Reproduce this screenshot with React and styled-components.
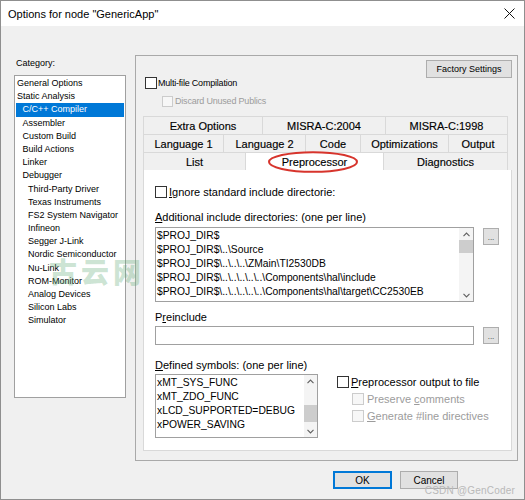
import React from 'react'
import styled, { createGlobalStyle } from 'styled-components'

const GlobalStyle = createGlobalStyle`
  html, body { margin: 0; padding: 0; background: #fff; }
  body { font-family: "Liberation Sans", Arial, sans-serif; color: #000; }
  * { box-sizing: border-box; }
`

const Window = styled.div`
  position: relative;
  width: 525px;
  height: 500px;
  border: 1px solid #8f8f8f;
  background: #f0f0f0;
  display: flex;
  flex-direction: column;
  overflow: hidden;
`

const TitleBar = styled.div`
  height: 25px;
  flex: none;
  background: #fff;
  display: flex;
  align-items: center;
  justify-content: space-between;
  padding: 0 9px 0 7px;
  font-size: 11px;
`

const Body = styled.div`
  display: grid;
  grid-template-columns: 112px 383px;
  column-gap: 9px;
  padding: 29px 0 0 13px;
  align-items: start;
`

const LeftCol = styled.div`
  display: flex;
  flex-direction: column;
`

const SmallLabel = styled.div`
  font-size: 9px;
  line-height: 11px;
  margin-top: 3px;
  margin-bottom: 6px;
  padding-left: 2px;
`

const ListBox = styled.div`
  height: 323px;
  background: #fff;
  border: 1px solid #a0a0a0;
  padding: 1px;
`

const ListItem = styled.div`
  font-size: 9px;
  line-height: 13.2px;
  height: 13.2px;
  white-space: nowrap;
  padding-left: ${p => 1 + p.$level * 5.5}px;
  background: ${p => (p.$selected ? '#0078d7' : 'transparent')};
  color: ${p => (p.$selected ? '#fff' : '#000')};
`

const Panel = styled.div`
  height: 406px;
  border: 1px solid #a9a9a9;
  padding: 0 5px 9px 7px;
  display: flex;
  flex-direction: column;
`

const PanelHeader = styled.div`
  height: 60px;
  flex: none;
  display: grid;
  grid-template-columns: 1fr auto;
  align-items: start;
`

const HeaderChecks = styled.div`
  padding: 21px 0 0 2px;
  display: flex;
  flex-direction: column;
  gap: 6px;
`

const WinButton = styled.button`
  width: ${p => p.$w}px;
  height: 18px;
  margin-top: ${p => p.$top || 0}px;
  padding: 0;
  font-family: inherit;
  font-size: ${p => p.$size || 9}px;
  color: #000;
  background: #e1e1e1;
  border: 1px solid ${p => (p.$default ? '#0078d7' : '#adadad')};
  box-shadow: ${p => (p.$default ? 'inset 0 0 0 1px #0078d7' : 'none')};
  border-radius: 0;
`

const CheckRow = styled.div`
  display: flex;
  align-items: center;
  gap: ${p => p.$gap || 2}px;
  margin-left: ${p => p.$indent || 0}px;
  font-size: ${p => p.$size || 11}px;
  letter-spacing: ${p => p.$tight ? '-0.2px' : '0'};
  line-height: 12px;
  color: ${p => (p.$disabled ? '#9c9c9c' : '#000')};
  white-space: nowrap;
`

const Box = styled.span`
  width: ${p => p.$s || 12}px;
  height: ${p => p.$s || 12}px;
  flex: none;
  background: ${p => (p.$disabled ? '#f7f7f7' : '#fff')};
  border: 1px solid ${p => (p.$disabled ? '#cccccc' : '#333')};
`

const TabStrip = styled.div`
  position: relative;
  width: 365px;
  flex: none;
`

const TabRow = styled.div`
  display: flex;
  height: 18px;
`

const Tab = styled.div`
  flex: 0 0 ${p => p.$w}px;
  display: flex;
  align-items: center;
  justify-content: center;
  font-size: 11px;
  color: #000;
  -webkit-text-stroke: 0.15px #000;
  background: ${p => (p.$active ? '#fff' : '#f0f0f0')};
  border-top: 1px solid #d9d9d9;
  border-left: 1px solid #d9d9d9;
  &:last-child { border-right: 1px solid #d9d9d9; }
`

const Ellipse = styled.svg`
  position: absolute;
  left: 125px;
  top: 35px;
  pointer-events: none;
`

const TabContent = styled.div`
  flex: 1;
  background: #fff;
  border: 1px solid #d9d9d9;
  border-top: none;
  padding: 16px 0 0 11px;
  display: flex;
  flex-direction: column;
`

const FieldLabel = styled.div`
  font-size: 11px;
  line-height: 14px;
  margin-top: ${p => p.$top}px;
  margin-bottom: ${p => p.$bottom}px;
`

const FieldRow = styled.div`
  display: grid;
  grid-template-columns: 319px 16px;
  column-gap: 9px;
  align-items: start;
`

const TextList = styled.div`
  height: ${p => p.$h}px;
  width: ${p => p.$w || 'auto'};
  background: #fff;
  border: 1px solid #a0a0a0;
  display: flex;
`

const Lines = styled.div`
  flex: 1;
  padding: 1px 0 0 1px;
  font-size: 10.3px;
  line-height: 14px;
  white-space: nowrap;
  overflow: hidden;
`

const ScrollBar = styled.div`
  width: ${p => p.$w}px;
  flex: none;
  background: #f4f4f4;
  display: flex;
  flex-direction: column;
  align-items: center;
`

const Arrow = styled.div`
  height: 12px;
  flex: none;
  display: flex;
  align-items: center;
  justify-content: center;
`

const Thumb = styled.div`
  width: 100%;
  height: ${p => p.$size}px;
  margin-top: ${p => p.$offset}px;
  background: #cdcdcd;
  flex: none;
`

const Spacer = styled.div`
  flex: 1;
`

const DotsButton = styled.div`
  width: 16px;
  height: 17px;
  margin-top: 1px;
  background: #e1e1e1;
  border: 1px solid #adadad;
  font-size: 8px;
  line-height: 18px;
  text-align: center;
  color: #333;
`

const InputBox = styled.div`
  height: 19px;
  background: #fff;
  border: 1px solid #a0a0a0;
`

const BottomRow = styled.div`
  display: flex;
  gap: 19px;
  align-items: start;
`

const OutputChecks = styled.div`
  padding-top: 2px;
  display: flex;
  flex-direction: column;
  gap: 5px;
`

const Footer = styled.div`
  display: flex;
  justify-content: flex-end;
  gap: 8px;
  padding: 10px 66px 0 0;
`

const Watermark = styled.div`
  position: absolute;
  right: 9px;
  bottom: 3px;
  font-size: 10px;
  color: #b9b9b9;
  letter-spacing: 0.2px;
`

const SiteMark = styled.div`
  position: absolute;
  left: 48px;
  top: 250px;
  font-family: "Noto Sans CJK SC", sans-serif;
  font-weight: 900;
  font-size: 28px;
  letter-spacing: 4px;
  color: rgba(96, 170, 118, 0.33);
  pointer-events: none;
`

const categories = [
  ['General Options', 0],
  ['Static Analysis', 0],
  ['C/C++ Compiler', 1, true],
  ['Assembler', 1],
  ['Custom Build', 1],
  ['Build Actions', 1],
  ['Linker', 1],
  ['Debugger', 1],
  ['Third-Party Driver', 2],
  ['Texas Instruments', 2],
  ['FS2 System Navigator', 2],
  ['Infineon', 2],
  ['Segger J-Link', 2],
  ['Nordic Semiconductor', 2],
  ['Nu-Link', 2],
  ['ROM-Monitor', 2],
  ['Analog Devices', 2],
  ['Silicon Labs', 2],
  ['Simulator', 2],
]

const tabRows = [
  [['Extra Options', 119], ['MISRA-C:2004', 123], ['MISRA-C:1998', 123]],
  [['Language 1', 80], ['Language 2', 82], ['Code', 55], ['Optimizations', 88], ['Output', 60]],
  [['List', 102], ['Preprocessor', 138, true], ['Diagnostics', 125]],
]

const includeDirs = [
  '$PROJ_DIR$',
  '$PROJ_DIR$\\..\\Source',
  '$PROJ_DIR$\\..\\..\\..\\ZMain\\TI2530DB',
  '$PROJ_DIR$\\..\\..\\..\\..\\..\\Components\\hal\\include',
  '$PROJ_DIR$\\..\\..\\..\\..\\..\\Components\\hal\\target\\CC2530EB',
]

const symbols = ['xMT_SYS_FUNC', 'xMT_ZDO_FUNC', 'xLCD_SUPPORTED=DEBUG', 'xPOWER_SAVING']

const Chevron = ({ up }) => (
  <svg width="7" height="5" viewBox="0 0 7 5">
    <path d={up ? 'M0.5 4.2 L3.5 1 L6.5 4.2' : 'M0.5 0.8 L3.5 4 L6.5 0.8'} fill="none" stroke="#606060" strokeWidth="1.1" />
  </svg>
)

const Scroll = ({ w, offset, size }) => (
  <ScrollBar $w={w}>
    <Arrow><Chevron up /></Arrow>
    <Thumb $offset={offset} $size={size} />
    <Spacer />
    <Arrow><Chevron /></Arrow>
  </ScrollBar>
)

export default function App() {
  return (
    <>
      <GlobalStyle />
      <Window>
        <TitleBar>
          <span>Options for node "GenericApp"</span>
          <svg width="11" height="11" viewBox="0 0 11 11">
            <path d="M0.5 0.5 L10.5 10.5 M10.5 0.5 L0.5 10.5" stroke="#111" strokeWidth="1" />
          </svg>
        </TitleBar>

        <Body>
          <LeftCol>
            <SmallLabel>Category:</SmallLabel>
            <ListBox>
              {categories.map(([name, level, selected]) => (
                <ListItem key={name} $level={level} $selected={selected}>{name}</ListItem>
              ))}
            </ListBox>
          </LeftCol>

          <Panel>
            <PanelHeader>
              <HeaderChecks>
                <CheckRow $size={9} $gap={1} $tight>
                  <Box $s={12} />
                  Multi-file Compilation
                </CheckRow>
                <CheckRow $size={9} $gap={2} $indent={17} $tight $disabled>
                  <Box $s={11} $disabled />
                  Discard Unused Publics
                </CheckRow>
              </HeaderChecks>
              <WinButton $w={86} $top={4}>Factory Settings</WinButton>
            </PanelHeader>

            <TabStrip>
              {tabRows.map((row, i) => (
                <TabRow key={i}>
                  {row.map(([label, w, active]) => (
                    <Tab key={label} $w={w} $active={active}>{label}</Tab>
                  ))}
                </TabRow>
              ))}
              <Ellipse width="90" height="22" viewBox="0 0 90 22">
                <ellipse cx="45" cy="11" rx="44" ry="9.8" fill="none" stroke="#d7342c" strokeWidth="2" />
              </Ellipse>
            </TabStrip>

            <TabContent>
              <CheckRow>
                <Box />
                <span><u>I</u>gnore standard include directorie:</span>
              </CheckRow>

              <FieldLabel $top={12} $bottom={3}><u>A</u>dditional include directories: (one per line)</FieldLabel>
              <FieldRow>
                <TextList $h={75}>
                  <Lines>
                    {includeDirs.map(d => <div key={d}>{d}</div>)}
                  </Lines>
                  <Scroll w={14} offset={0} size={13} />
                </TextList>
                <DotsButton>...</DotsButton>
              </FieldRow>

              <FieldLabel $top={8} $bottom={2}>P<u>r</u>einclude</FieldLabel>
              <FieldRow>
                <InputBox />
                <DotsButton>...</DotsButton>
              </FieldRow>

              <FieldLabel $top={13} $bottom={2}><u>D</u>efined symbols: (one per line)</FieldLabel>
              <BottomRow>
                <TextList $h={64} $w="163px">
                  <Lines>
                    {symbols.map(s => <div key={s}>{s}</div>)}
                  </Lines>
                  <Scroll w={13} offset={18} size={17} />
                </TextList>
                <OutputChecks>
                  <CheckRow>
                    <Box />
                    <span><u>P</u>reprocessor output to file</span>
                  </CheckRow>
                  <CheckRow $indent={15} $gap={3} $disabled>
                    <Box $disabled />
                    <span>Preserve <u>c</u>omments</span>
                  </CheckRow>
                  <CheckRow $indent={15} $gap={3} $disabled>
                    <Box $disabled />
                    <span><u>G</u>enerate #line directives</span>
                  </CheckRow>
                </OutputChecks>
              </BottomRow>
            </TabContent>
          </Panel>
        </Body>

        <Footer>
          <WinButton $w={59} $size={10} $default>OK</WinButton>
          <WinButton $w={58} $size={10}>Cancel</WinButton>
        </Footer>

        <SiteMark>古云网</SiteMark>
        <Watermark>CSDN @GenCoder</Watermark>
      </Window>
    </>
  )
}
